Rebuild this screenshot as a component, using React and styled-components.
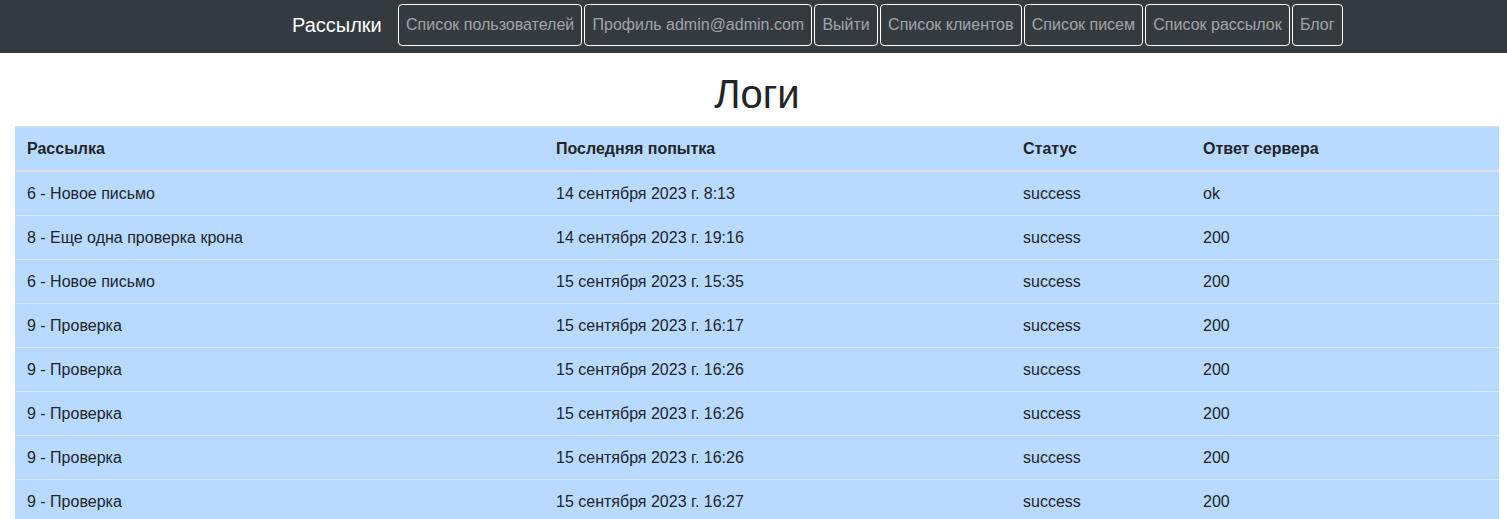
import React from "react";
import styled, { createGlobalStyle } from "styled-components";

const GlobalStyle = createGlobalStyle`
    body {
        margin: 0;
        font-family: "Liberation Sans", Arial, sans-serif;
        font-size: 16px;
        color: #212529;
        background: #fff;
    }
`;

const NavBar = styled.nav`
    background: #343a40;
    height: 53px;
    box-sizing: border-box;
    padding: 4px 0 7px 292px;
    display: flex;
    align-items: center;
`;

const Brand = styled.a`
    color: #fff;
    font-size: 20px;
    margin-right: 16px;
    text-decoration: none;
    white-space: nowrap;
`;

const NavList = styled.div`
    display: flex;
    gap: 2px;
`;

const NavButton = styled.a`
    display: flex;
    align-items: center;
    height: 42px;
    box-sizing: border-box;
    padding: 0 7px 0 7.3px;
    border: 1px solid #fff;
    border-radius: 4px;
    color: rgba(255, 255, 255, 0.55);
    font-size: 16px;
    text-decoration: none;
    white-space: nowrap;
`;

const Main = styled.main`
    padding: 0 8px 0 15px;
`;

const Title = styled.h1`
    margin: 0;
    padding: 17px 0 8px;
    text-align: center;
    font-size: 40px;
    font-weight: 400;
    line-height: 48px;
`;

const Table = styled.table`
    width: 100%;
    table-layout: fixed;
    border-collapse: collapse;
    background: #b8daff;
    border-top: 1px solid #dee2e6;
`;

const HeadCell = styled.th`
    box-sizing: border-box;
    text-align: left;
    font-weight: 700;
    padding: 10px 12px;
    line-height: 23px;
    border-bottom: 2px solid #dee2e6;
    width: ${(p) => p.w || "auto"};
`;

const Row = styled.tr`
    & + & td {
        border-top: 1px solid #d3e6ff;
    }
`;

const Cell = styled.td`
    padding: 10px 12px;
    line-height: 23px;
    white-space: nowrap;
`;

const navItems = [
    "Список пользователей",
    "Профиль admin@admin.com",
    "Выйти",
    "Список клиентов",
    "Список писем",
    "Список рассылок",
    "Блог",
];

const logs = [
    ["6 - Новое письмо", "14 сентября 2023 г. 8:13", "success", "ok"],
    ["8 - Еще одна проверка крона", "14 сентября 2023 г. 19:16", "success", "200"],
    ["6 - Новое письмо", "15 сентября 2023 г. 15:35", "success", "200"],
    ["9 - Проверка", "15 сентября 2023 г. 16:17", "success", "200"],
    ["9 - Проверка", "15 сентября 2023 г. 16:26", "success", "200"],
    ["9 - Проверка", "15 сентября 2023 г. 16:26", "success", "200"],
    ["9 - Проверка", "15 сентября 2023 г. 16:26", "success", "200"],
    ["9 - Проверка", "15 сентября 2023 г. 16:27", "success", "200"],
];

const App = () => {
    return (
        <>
            <GlobalStyle />
            <NavBar>
                <Brand href="#">Рассылки</Brand>
                <NavList>
                    {navItems.map((item) => (
                        <NavButton key={item} href="#">{item}</NavButton>
                    ))}
                </NavList>
            </NavBar>
            <Main>
                <Title>Логи</Title>
                <Table>
                    <thead>
                        <tr>
                            <HeadCell w="529px">Рассылка</HeadCell>
                            <HeadCell w="467px">Последняя попытка</HeadCell>
                            <HeadCell w="180px">Статус</HeadCell>
                            <HeadCell>Ответ сервера</HeadCell>
                        </tr>
                    </thead>
                    <tbody>
                        {logs.map((row, i) => (
                            <Row key={i}>
                                {row.map((v, j) => (
                                    <Cell key={j}>{v}</Cell>
                                ))}
                            </Row>
                        ))}
                    </tbody>
                </Table>
            </Main>
        </>
    );
};

export default App;
